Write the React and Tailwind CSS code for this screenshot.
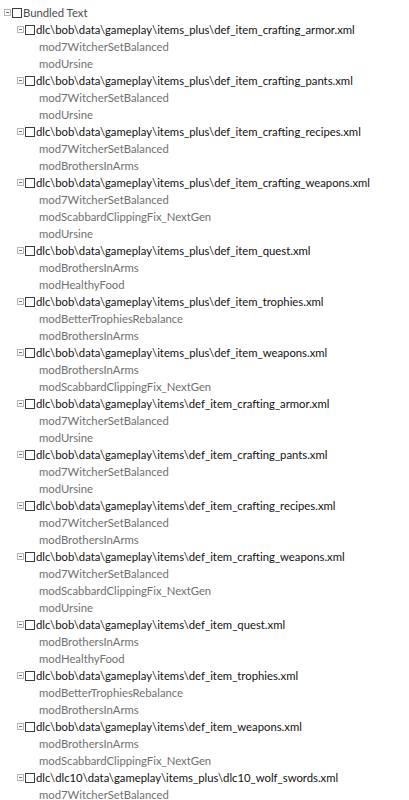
import React from 'react';

const tree = [
  ['dlc\\bob\\data\\gameplay\\items_plus\\def_item_crafting_armor.xml', ['mod7WitcherSetBalanced', 'modUrsine']],
  ['dlc\\bob\\data\\gameplay\\items_plus\\def_item_crafting_pants.xml', ['mod7WitcherSetBalanced', 'modUrsine']],
  ['dlc\\bob\\data\\gameplay\\items_plus\\def_item_crafting_recipes.xml', ['mod7WitcherSetBalanced', 'modBrothersInArms']],
  ['dlc\\bob\\data\\gameplay\\items_plus\\def_item_crafting_weapons.xml', ['mod7WitcherSetBalanced', 'modScabbardClippingFix_NextGen', 'modUrsine']],
  ['dlc\\bob\\data\\gameplay\\items_plus\\def_item_quest.xml', ['modBrothersInArms', 'modHealthyFood']],
  ['dlc\\bob\\data\\gameplay\\items_plus\\def_item_trophies.xml', ['modBetterTrophiesRebalance', 'modBrothersInArms']],
  ['dlc\\bob\\data\\gameplay\\items_plus\\def_item_weapons.xml', ['modBrothersInArms', 'modScabbardClippingFix_NextGen']],
  ['dlc\\bob\\data\\gameplay\\items\\def_item_crafting_armor.xml', ['mod7WitcherSetBalanced', 'modUrsine']],
  ['dlc\\bob\\data\\gameplay\\items\\def_item_crafting_pants.xml', ['mod7WitcherSetBalanced', 'modUrsine']],
  ['dlc\\bob\\data\\gameplay\\items\\def_item_crafting_recipes.xml', ['mod7WitcherSetBalanced', 'modBrothersInArms']],
  ['dlc\\bob\\data\\gameplay\\items\\def_item_crafting_weapons.xml', ['mod7WitcherSetBalanced', 'modScabbardClippingFix_NextGen', 'modUrsine']],
  ['dlc\\bob\\data\\gameplay\\items\\def_item_quest.xml', ['modBrothersInArms', 'modHealthyFood']],
  ['dlc\\bob\\data\\gameplay\\items\\def_item_trophies.xml', ['modBetterTrophiesRebalance', 'modBrothersInArms']],
  ['dlc\\bob\\data\\gameplay\\items\\def_item_weapons.xml', ['modBrothersInArms', 'modScabbardClippingFix_NextGen']],
  ['dlc\\dlc10\\data\\gameplay\\items_plus\\dlc10_wolf_swords.xml', ['mod7WitcherSetBalanced', 'modUrsine']],
];

// little boxed minus used by the WinForms tree
const Expander = () => (
  <span className="flex items-center justify-center w-[7px] h-[7px] border border-[#b4b4b4] bg-white mr-px">
    <span className="w-[3px] h-px bg-[#6a6a6a]" />
  </span>
);

const Check = () => (
  <span className="w-[10px] h-[10px] border border-[#3c3c3c] bg-white mr-px" />
);

const Node = ({ label, color }) => (
  <div className="flex items-center h-[17px]">
    <Expander />
    <Check />
    <span className={`${color} whitespace-nowrap`}>{label}</span>
  </div>
);

export default function App() {
  return (
    <div
      className="w-[409px] h-[800px] overflow-hidden bg-white pt-[4px] pl-[4px] text-[11.3px] leading-[17px]"
      style={{ fontFamily: 'Lato, "Open Sans", sans-serif' }}
    >
      <Node label="Bundled Text" color="text-[#4a4a4a]" />
      <div className="pl-[13px]">
        {tree.map(([file, mods]) => (
          <div key={file}>
            <Node label={file} color="text-[#111]" />
            {mods.map((m, i) => (
              <div key={i} className="h-[17px] pl-[22px] text-[#707070] whitespace-nowrap">
                {m}
              </div>
            ))}
          </div>
        ))}
      </div>
    </div>
  );
}
